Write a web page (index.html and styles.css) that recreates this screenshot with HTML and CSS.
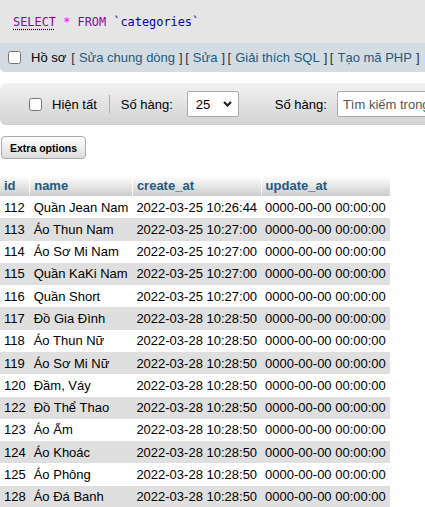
FILE: index.html
```html
<!DOCTYPE html>
<html lang="vi">
<head>
<meta charset="utf-8">
<title>categories</title>
<link rel="stylesheet" href="styles.css">
</head>
<body>
<div class="page">
  <div class="sqlbox">
    <code class="sql"><span class="kw kw-first">SELECT</span> <span class="op">*</span> <span class="kw">FROM</span> <span class="ident">`categories`</span></code>
  </div>
  <div class="tools">
    <input type="checkbox" class="cb">
    <span class="tools-label">Hồ sơ</span>
    <span class="grp"><span class="br-o">[</span><a class="lnk">Sửa chung dòng</a><span class="br-c">]</span></span>
    <span class="grp"><span class="br-o">[</span><a class="lnk">Sửa</a><span class="br-c">]</span></span>
    <span class="grp"><span class="br-o">[</span><a class="lnk">Giải thích SQL</a><span class="br-c">]</span></span>
    <span class="grp"><span class="br-o">[</span><a class="lnk">Tạo mã PHP</a><span class="br-c">]</span></span>
  </div>
  <div class="nav">
    <input type="checkbox" class="cb nav-cb">
    <span class="nav-showall">Hiện tất</span>
    <span class="nav-sep"></span>
    <span class="nav-label">Số hàng:</span>
    <div class="fake-select">
      <span>25</span>
      <svg width="9" height="6" viewBox="0 0 9 6"><path d="M1 1 L4.5 4.5 L8 1" fill="none" stroke="#222" stroke-width="2.2"/></svg>
    </div>
    <span class="nav-label nav-label2">Số hàng:</span>
    <input type="text" class="search" placeholder="Tìm kiếm trong bảng này">
  </div>
  <button class="extra">Extra options</button>
  <table class="data">
    <thead>
      <tr><th>id</th><th>name</th><th>create_at</th><th>update_at</th></tr>
    </thead>
    <tbody>
      <tr><td>112</td><td>Quần Jean Nam</td><td>2022-03-25 10:26:44</td><td>0000-00-00 00:00:00</td></tr>
      <tr><td>113</td><td>Áo Thun Nam</td><td>2022-03-25 10:27:00</td><td>0000-00-00 00:00:00</td></tr>
      <tr><td>114</td><td>Áo Sơ Mi Nam</td><td>2022-03-25 10:27:00</td><td>0000-00-00 00:00:00</td></tr>
      <tr><td>115</td><td>Quần KaKi Nam</td><td>2022-03-25 10:27:00</td><td>0000-00-00 00:00:00</td></tr>
      <tr><td>116</td><td>Quần Short</td><td>2022-03-25 10:27:00</td><td>0000-00-00 00:00:00</td></tr>
      <tr><td>117</td><td>Đồ Gia Đình</td><td>2022-03-28 10:28:50</td><td>0000-00-00 00:00:00</td></tr>
      <tr><td>118</td><td>Áo Thun Nữ</td><td>2022-03-28 10:28:50</td><td>0000-00-00 00:00:00</td></tr>
      <tr><td>119</td><td>Áo Sơ Mi Nữ</td><td>2022-03-28 10:28:50</td><td>0000-00-00 00:00:00</td></tr>
      <tr><td>120</td><td>Đầm, Váy</td><td>2022-03-28 10:28:50</td><td>0000-00-00 00:00:00</td></tr>
      <tr><td>122</td><td>Đồ Thể Thao</td><td>2022-03-28 10:28:50</td><td>0000-00-00 00:00:00</td></tr>
      <tr><td>123</td><td>Áo Ấm</td><td>2022-03-28 10:28:50</td><td>0000-00-00 00:00:00</td></tr>
      <tr><td>124</td><td>Áo Khoác</td><td>2022-03-28 10:28:50</td><td>0000-00-00 00:00:00</td></tr>
      <tr><td>125</td><td>Áo Phông</td><td>2022-03-28 10:28:50</td><td>0000-00-00 00:00:00</td></tr>
      <tr><td>128</td><td>Áo Đá Banh</td><td>2022-03-28 10:28:50</td><td>0000-00-00 00:00:00</td></tr>
    </tbody>
  </table>
</div>
</body>
</html>
```

FILE: styles.css
```css
html, body {
  margin: 0;
  padding: 0;
  overflow: hidden;
  background: #fff;
}
body {
  font-family: "Liberation Sans", Arial, sans-serif;
  font-size: 13px;
  color: #000;
}
.page {
  width: 640px;
}
.sqlbox {
  background: #e5e5e5;
  height: 43px;
  padding: 0 13px;
  box-sizing: border-box;
  display: flex;
  align-items: center;
}
.sql {
  font-family: "DejaVu Sans Mono", "Liberation Mono", monospace;
  font-size: 11.9px;
  color: #000;
}
.kw { color: #990099; }
.kw-first {
  text-decoration: underline dotted #000;
  text-underline-offset: 3px;
}
.op { color: #ff00ff; }
.ident { color: #0000aa; }
.tools {
  background: #d3dce3;
  height: 29px;
  display: flex;
  align-items: center;
  border-bottom-left-radius: 5px;
  white-space: nowrap;
}
.cb {
  width: 13px;
  height: 13px;
  margin: 0 10px 0 8px;
}
.tools-label { margin-right: 2.5px; }
.grp { margin-left: 2.5px; }
.br-o { color: #333; margin-right: 4px; }
.br-c { color: #333; margin-left: 4px; }
.lnk { color: #235a81; text-decoration: none; }
.nav {
  margin-top: 11px;
  height: 42px;
  background: linear-gradient(#f2f2f2, #d2d2d2);
  border-radius: 6px;
  display: flex;
  align-items: center;
  white-space: nowrap;
}
.nav-cb { margin-left: 29px; margin-right: 10px; }
.nav-sep {
  width: 1px;
  height: 18px;
  background: #c0ab92;
  margin: 0 11px 0 12px;
}
.fake-select {
  margin-left: 14px;
  width: 52px;
  height: 26px;
  box-sizing: border-box;
  background: #fff;
  border: 1px solid #aaa;
  border-radius: 2px;
  display: flex;
  align-items: center;
  justify-content: space-between;
  padding: 0 6px 0 8px;
}
.nav-label2 { margin-left: 36px; }
.search {
  margin-left: 10px;
  width: 160px;
  height: 26px;
  box-sizing: border-box;
  border: 1px solid #aaa;
  border-radius: 2px;
  padding: 0 5px;
  font-family: "Liberation Sans", Arial, sans-serif;
  font-size: 13px;
}
.search::placeholder { color: #555; }
.extra {
  display: block;
  margin: 11px 0 0 1px;
  width: 85px;
  height: 23px;
  padding: 0;
  border: 1px solid #aaa;
  border-radius: 4px;
  background: linear-gradient(#ffffff, #dcdcdc);
  font-family: "Liberation Sans", Arial, sans-serif;
  font-size: 10.5px;
  font-weight: bold;
  color: #000;
}
.data {
  margin-top: 17px;
  border-collapse: collapse;
}
.data th {
  text-align: left;
  font-weight: bold;
  color: #235a81;
  background: linear-gradient(#ffffff, #cccccc);
  padding: 2px 4px 3px;
  line-height: 15px;
  border-left: 1px solid #fff;
}
.data th:first-child { border-left: 0; }
.data td {
  padding: 3.65px 4px;
  line-height: 15px;
  white-space: nowrap;
}
.data tbody tr:nth-child(odd) { background: #fff; }
.data tbody tr:nth-child(even) { background: #dfdfdf; }
```
